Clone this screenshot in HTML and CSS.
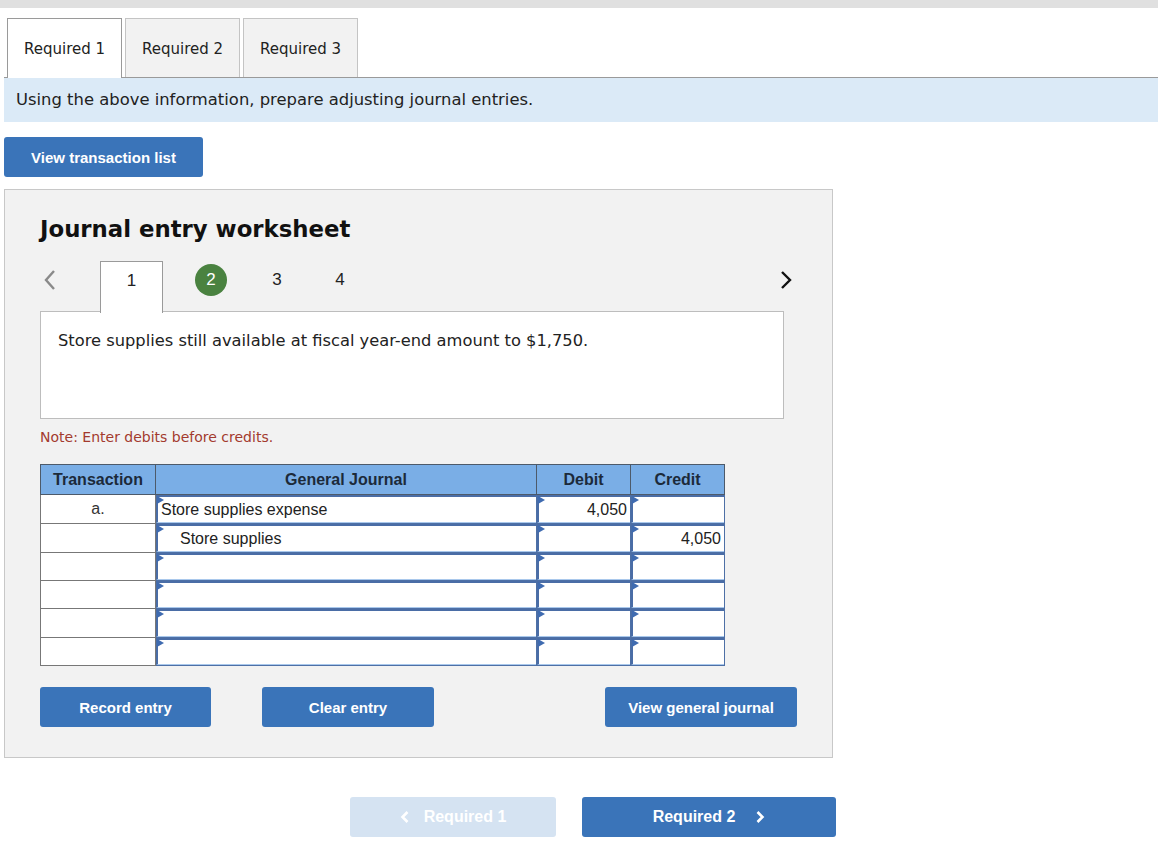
FILE: index.html
```html
<!DOCTYPE html>
<html lang="en">
<head>
    <meta charset="UTF-8">
    <title>Journal entry worksheet</title>
    <link rel="stylesheet" href="styles.css">
</head>
<body>

<div class="topbar"></div>

<div class="page">
    <div class="tabs">
        <div class="tab active">Required 1</div>
        <div class="tab">Required 2</div>
        <div class="tab">Required 3</div>
    </div>

    <div class="instructions">Using the above information, prepare adjusting journal entries.</div>

    <button class="btn btn-list">View transaction list</button>

    <div class="worksheet">
        <h2>Journal entry worksheet</h2>

        <div class="steps">
            <span class="arrow prev">
                <svg width="14" height="22" viewBox="0 0 14 22"><path d="M11 2 L3 11 L11 20" fill="none" stroke="#8a8a8a" stroke-width="2.4"/></svg>
            </span>
            <span class="step current">1</span>
            <span class="step done">2</span>
            <span class="step s3">3</span>
            <span class="step s4">4</span>
            <span class="arrow next">
                <svg width="14" height="22" viewBox="0 0 14 22"><path d="M3 3 L11 11 L3 19" fill="none" stroke="#111" stroke-width="2.4"/></svg>
            </span>
        </div>

        <div class="description">Store supplies still available at fiscal year-end amount to $1,750.</div>

        <p class="note">Note: Enter debits before credits.</p>

        <table class="journal">
            <thead>
                <tr>
                    <th class="col-tr">Transaction</th>
                    <th class="col-gj">General Journal</th>
                    <th class="col-dr">Debit</th>
                    <th class="col-cr">Credit</th>
                </tr>
            </thead>
            <tbody id="rows"></tbody>
        </table>

        <div class="actions">
            <button class="btn btn-record">Record entry</button>
            <button class="btn btn-clear">Clear entry</button>
            <button class="btn btn-view">View general journal</button>
        </div>
    </div>

    <div class="pager">
        <button class="btn btn-prev">
            <svg width="10" height="14" viewBox="0 0 10 14"><path d="M7.5 2 L2.5 7 L7.5 12" fill="none" stroke="#fff" stroke-width="2.6"/></svg>
            Required 1
        </button>
        <button class="btn btn-next">
            Required 2
            <svg width="10" height="14" viewBox="0 0 10 14"><path d="M2.5 2 L7.5 7 L2.5 12" fill="none" stroke="#fff" stroke-width="2.6"/></svg>
        </button>
    </div>
</div>

<script>
    const entries = [
        {tr: 'a.', account: 'Store supplies expense', indent: false, debit: '4,050', credit: ''},
        {tr: '', account: 'Store supplies', indent: true, debit: '', credit: '4,050'},
        {tr: '', account: '', debit: '', credit: ''},
        {tr: '', account: '', debit: '', credit: ''},
        {tr: '', account: '', debit: '', credit: ''},
        {tr: '', account: '', debit: '', credit: ''}
    ];
    const rows = document.getElementById('rows');
    entries.forEach((e, i) => {
        const h = i === 2 || i === 3 || i === 5 ? 'short' : '';
        rows.innerHTML += `<tr class="${h}">
            <td class="tr-cell">${e.tr}</td>
            <td class="in-cell"><div class="field${e.indent ? ' indent' : ''}">${e.account}</div></td>
            <td class="in-cell"><div class="field num">${e.debit}</div></td>
            <td class="in-cell"><div class="field num">${e.credit}</div></td>
        </tr>`;
    });
</script>

</body>
</html>
```

FILE: styles.css
```css
body {
    margin: 0;
    padding: 0;
    background: #fff;
    font-family: 'DejaVu Sans', Verdana, sans-serif;
    color: #222;
}
.topbar {
    width: 1158px;
    height: 8px;
    background: #e0e0e0;
}
.page {
    width: 1154px;
    padding-left: 4px;
}
.tabs {
    display: flex;
    gap: 3px;
    margin-top: 10px;
    padding-left: 3px;
    border-bottom: 1px solid #9a9a9a;
}
.tab {
    width: 113px;
    height: 58px;
    line-height: 60px;
    text-align: center;
    font-size: 15px;
    color: #222;
    background: #f2f2f2;
    border: 1px solid #c4c4c4;
    border-bottom: none;
}
.tab.active {
    background: #fff;
    border-color: #9a9a9a;
    margin-bottom: -1px;
    height: 59px;
}
.instructions {
    height: 44px;
    line-height: 44px;
    padding-left: 12px;
    background: #dbeaf7;
    font-size: 16.4px;
    color: #222;
}
.btn {
    display: inline-flex;
    align-items: center;
    justify-content: center;
    gap: 14px;
    height: 40px;
    border: none;
    border-radius: 3px;
    background: #3a74b9;
    color: #fff;
    font-family: 'Liberation Sans', Arial, sans-serif;
    font-weight: bold;
    font-size: 15px;
    padding: 0;
    cursor: pointer;
}
.btn-list {
    width: 199px;
    margin-top: 15px;
}
.worksheet {
    width: 792px;
    margin-top: 12px;
    padding: 24px 0 30px 35px;
    background: #f2f2f2;
    border: 1px solid #c8c8c8;
}
.worksheet h2 {
    margin: 0;
    font-size: 22.8px;
    line-height: 30px;
    color: #111;
}
.steps {
    display: flex;
    align-items: flex-start;
    width: 760px;
    height: 50px;
    margin-top: 17px;
}
.arrow {
    display: flex;
    align-items: center;
    margin-top: 8px;
}
.arrow.prev {
    width: 60px;
    padding-left: 3px;
    box-sizing: border-box;
}
.arrow.next {
    margin-left: auto;
    margin-right: 7px;
}
.step {
    font-family: 'Liberation Sans', Arial, sans-serif;
    font-size: 17px;
    line-height: 38px;
    color: #222;
    text-align: center;
}
.step.current {
    width: 61px;
    height: 51px;
    background: #fff;
    border: 1px solid #9a9a9a;
    border-bottom: none;
    position: relative;
    z-index: 1;
}
.step.done {
    width: 32px;
    height: 32px;
    line-height: 32px;
    margin-left: 32px;
    margin-top: 3px;
    border-radius: 50%;
    background: #4a8240;
    color: #fff;
}
.step.s3 {
    width: 20px;
    margin-left: 40px;
}
.step.s4 {
    width: 20px;
    margin-left: 43px;
}
.description {
    width: 708px;
    height: 72px;
    padding: 19px 17px 15px 17px;
    background: #fff;
    border: 1px solid #bdbdbd;
    font-size: 16.3px;
    line-height: 20px;
    color: #222;
}
.note {
    margin: 9px 0 0;
    font-size: 14px;
    line-height: 18px;
    color: #a33a2e;
}
.journal {
    margin-top: 18px;
    border-collapse: collapse;
    width: 684px;
    table-layout: fixed;
    font-family: 'Liberation Sans', Arial, sans-serif;
    font-size: 16px;
}
.journal th {
    height: 29px;
    padding: 0;
    background: #7aaee6;
    border: 1px solid #4d5a6a;
    color: #1c2a3a;
    font-weight: bold;
    font-size: 16px;
}
.col-tr { width: 114px; }
.col-gj { width: 380px; }
.col-dr { width: 93px; }
.col-cr { width: 93px; }
.journal td {
    height: 28px;
    padding: 0;
    background: #fff;
}
.journal tr.short td {
    height: 27px;
}
.tr-cell {
    border: 1px solid #777;
    text-align: center;
    color: #333;
}
.in-cell {
    border: 1px solid #4e70a6;
    vertical-align: top;
}
.field {
    position: relative;
    height: 100%;
    box-sizing: border-box;
    min-height: 27px;
    border-top: 2px solid #4a6da6;
    border-left: 2px solid #4a6da6;
    border-bottom: 1px solid #a9c8ec;
    padding: 2px 3px 0 3px;
    color: #222;
    line-height: 22px;
}
.field::before {
    content: '';
    position: absolute;
    left: -1px;
    top: -1px;
    border-top: 4px solid transparent;
    border-bottom: 4px solid transparent;
    border-left: 7px solid #3f6bb0;
}
.field.indent {
    padding-left: 22px;
}
.field.num {
    text-align: right;
    padding-right: 3px;
}
.actions {
    display: flex;
    margin-top: 21px;
    width: 757px;
}
.btn-record {
    width: 171px;
}
.btn-clear {
    width: 172px;
    margin-left: 51px;
}
.btn-view {
    width: 192px;
    margin-left: auto;
}
.pager {
    display: flex;
    gap: 26px;
    margin-top: 39px;
    padding-left: 346px;
}
.btn-prev {
    width: 206px;
    background: #d5e3f2;
    font-size: 16px;
    cursor: default;
}
.btn-next {
    width: 254px;
    font-size: 16px;
    gap: 20px;
}
```
